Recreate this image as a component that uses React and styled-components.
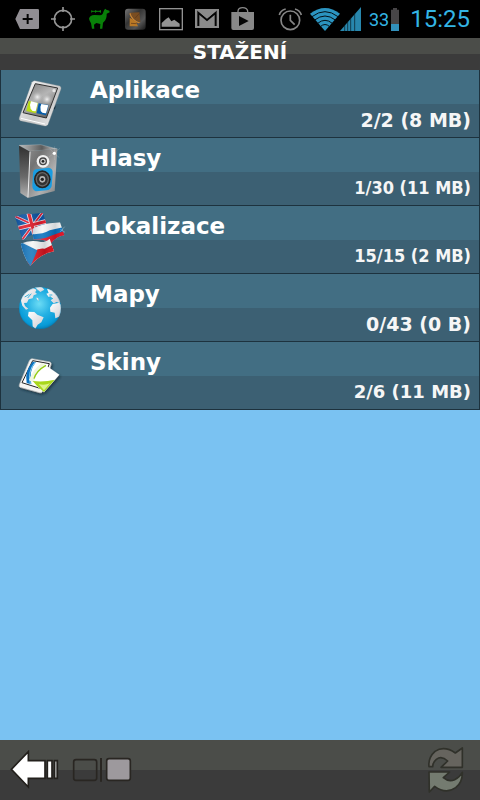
import React, { useState } from "react";
import styled, { createGlobalStyle } from "styled-components";

const GlobalStyle = createGlobalStyle`
  * {
    box-sizing: border-box;
  }

  body {
    margin: 0;
    background: #7ac2f2;
    font-family: "DejaVu Sans", Verdana, sans-serif;
  }
`;

const TagIcon = () => (
  <svg width="24" height="24" viewBox="45 21 72 72">
    <path d="M60 27H113Q117 27 117 31V83Q117 87 113 87H60L46 57Z" fill="#918e93" />
    <path d="M83 42V72M68 57H98" stroke="#050505" strokeWidth="6" />
  </svg>
);

const TargetIcon = () => (
  <svg width="24" height="24" viewBox="153 21 72 72">
    <circle cx="189" cy="57" r="26" fill="none" stroke="#969696" strokeWidth="5" />
    <path
      d="M189 21V36M189 78V93M153 57H168M210 57H225"
      stroke="#969696"
      strokeWidth="5"
    />
  </svg>
);

const LlamaIcon = () => (
  <svg width="24" height="24" viewBox="261 21 72 72">
    <path
      d="M267 56Q270 45 283 45L300 46Q309 45 310 36L313 29L316 26L319 29L328 32L329 37L320 41Q321 57 312 65L309 68L307 86H300L301 72L289 69L282 74L283 86H276L273 70L269 62Z"
      fill="#088008"
    />
    <path
      d="M274 30L279 34L274 39ZM285 30L292 34L285 39ZM303 30L296 34L303 39Z"
      fill="#078007"
    />
    <path d="M274 34H303" stroke="#078007" strokeWidth="3" />
  </svg>
);

const DishIcon = () => (
  <svg width="24" height="24" viewBox="369 21 72 72">
    <defs>
      <linearGradient id="dishBack" x2="1" y2="1">
        <stop offset="0" stopColor="#777" />
        <stop offset="0.4" stopColor="#343434" />
        <stop offset="0.7" stopColor="#555" />
        <stop offset="1" stopColor="#171717" />
      </linearGradient>
    </defs>
    <rect x="375" y="26" width="62" height="63" rx="9" fill="url(#dishBack)" />
    <path d="M391 38L418 37L421 66Q400 62 391 38Z" fill="#7a4d20" />
    <path d="M391 38Q398 61 421 68L416 70Q394 63 388 41Z" fill="#c98331" />
    <path d="M389 53L396 57L408 65L414 79H389Z" fill="#b97825" />
    <path
      d="M405 55L418 40M393 70L410 71"
      fill="none"
      stroke="#5a3719"
      strokeWidth="2"
    />
  </svg>
);

const PictureIcon = () => (
  <svg width="24" height="24" viewBox="57 21 72 72">
    <rect x="59" y="26" width="68" height="63" fill="none" stroke="#929292" strokeWidth="4" />
    <path
      d="M65 80V69L78 57L86 52L94 64L103 59L119 71V80Z"
      fill="#949494"
    />
  </svg>
);

const MailIcon = () => (
  <svg width="24" height="24" viewBox="165 21 72 72">
    <rect x="165" y="27" width="72" height="57" fill="#8b8b8b" />
    <path
      d="M175 78V38L201 60L227 38V78"
      fill="none"
      stroke="#050505"
      strokeWidth="6"
    />
    <path d="M174 31L201 53L228 31" fill="none" stroke="#8b8b8b" strokeWidth="4" />
  </svg>
);

const ShopIcon = () => (
  <svg width="24" height="24" viewBox="273 18 72 72">
    <path
      d="M294 36V30Q295 20 308 20Q321 20 323 30V36"
      fill="none"
      stroke="#8a8a8a"
      strokeWidth="4"
    />
    <path d="M274 33H342V81Q342 87 336 87H280Q274 87 274 81Z" fill="#888" />
    <path d="M297 45L326 60L297 75Z" fill="#050505" />
  </svg>
);

const AlarmIcon = () => (
  <svg width="24" height="24" viewBox="414 21 72 72">
    <g fill="none" stroke="#868686" strokeWidth="5">
      <circle cx="451" cy="61" r="28" />
      <path d="M418 45Q421 31 437 27M465 27Q480 31 484 45" />
      <path d="M451 44V61L464 74" />
    </g>
  </svg>
);

const WifiIcon = () => (
  <svg width="30" height="24" viewBox="33 18 90 72">
    <path d="M33 38Q78 4 123 38L78 90Z" fill="#2b94c0" />
    <g fill="none" stroke="#031017" strokeWidth="3">
      <path d="M39 47Q78 17 117 47" />
      <path d="M47 57Q78 33 109 57" />
      <path d="M56 67Q78 49 100 67" />
      <path d="M64 77Q78 64 92 77" />
    </g>
  </svg>
);

const SignalIcon = () => (
  <svg width="21" height="24" viewBox="120 18 63 72">
    <path d="M120 90L183 18V90Z" fill="#2887ad" />
    <path
      d="M134 72V90M143 61V90M152 50V90M164 36V90"
      stroke="#061820"
      strokeWidth="2"
    />
  </svg>
);

const BatteryIcon = () => (
  <svg width="8" height="24" viewBox="273 18 24 72">
    <path d="M279 21H291V26H297V70H273V26H279Z" fill="#474547" />
    <path d="M273 69H297V90H273Z" fill="#3290bb" />
  </svg>
);

const TabletArt = () => (
  <svg width="60" height="60" viewBox="30 18 180 180">
    <defs>
      <linearGradient id="tabletBody" x2="1" y2="1">
        <stop offset="0" stopColor="#fff" />
        <stop offset="0.6" stopColor="#c8c8c8" />
        <stop offset="1" stopColor="#f5f5f5" />
      </linearGradient>
      <linearGradient id="tabletGlass" x1="0" y1="0" x2="0.6" y2="1">
        <stop offset="0" stopColor="#777" />
        <stop offset="0.5" stopColor="#b5b5b5" />
        <stop offset="1" stopColor="#686868" />
      </linearGradient>
      <radialGradient id="tabletGlow">
        <stop offset="0" stopColor="#f2f2f2" />
        <stop offset="1" stopColor="#aaa" stopOpacity="0" />
      </radialGradient>
    </defs>
    <path
      d="M104 38L179 54Q184 56 183 62L144 169Q141 175 135 174L61 158Q56 155 58 149L96 43Q99 38 104 38Z"
      fill="url(#tabletBody)"
      stroke="#9a9d9e"
      strokeWidth="1"
    />
    <path
      d="M106 47L173 60L139 150L69 134Z"
      fill="url(#tabletGlass)"
      stroke="#303030"
      strokeWidth="3"
    />
    <circle cx="112" cy="87" r="18" fill="url(#tabletGlow)" />
    <circle cx="141" cy="94" r="19" fill="url(#tabletGlow)" />
    <circle cx="162" cy="68" r="5" fill="#e5e5e5" />
    <path d="M86 99L114 105L107 136L79 129Z" fill="#b8dc16" />
    <path d="M93 100L113 105L107 130Q96 131 92 122Q88 110 93 100Z" fill="#fff" />
    <path d="M116 106L146 111L138 142L110 136Z" fill="#075da9" />
    <path d="M124 108L145 112L138 136Q126 137 122 129Q119 117 124 108Z" fill="#fff" />
    <path d="M168 112L162 121L164 125Z" fill="#152532" />
    <path d="M63 151L135 168" stroke="#fff" strokeWidth="3" />
  </svg>
);

const SpeakerArt = () => (
  <svg width="60" height="60" viewBox="30 18 180 180">
    <defs>
      <linearGradient id="speakerFront" x2="1" y2="1">
        <stop offset="0" stopColor="#8a8a8a" />
        <stop offset="0.25" stopColor="#737373" />
        <stop offset="0.65" stopColor="#b0b0b0" />
        <stop offset="1" stopColor="#7c7c7c" />
      </linearGradient>
      <linearGradient id="speakerSide" x2="0" y2="1">
        <stop offset="0" stopColor="#303030" />
        <stop offset="0.6" stopColor="#6a6a6a" />
        <stop offset="1" stopColor="#b5b5b5" />
      </linearGradient>
      <linearGradient id="speakerTop">
        <stop offset="0" stopColor="#c0c0c0" />
        <stop offset="0.6" stopColor="#5c5c5c" />
        <stop offset="1" stopColor="#ccc" />
      </linearGradient>
    </defs>
    <path d="M57 28L90 46L84 186L61 171Z" fill="url(#speakerSide)" />
    <path d="M57 28L122 26L172 39L90 46Z" fill="url(#speakerTop)" stroke="#ccc" />
    <path d="M90 46L172 39L164 165L84 186Z" fill="url(#speakerFront)" />
    <path d="M90 47L84 184" stroke="#eee" strokeWidth="3" />
    <circle cx="129" cy="76" r="19" fill="#f1f1f1" />
    <circle cx="129" cy="76" r="12" fill="#454545" />
    <circle cx="129" cy="76" r="8" fill="#d0d0d0" />
    <circle cx="129" cy="76" r="4" fill="#222" />
    <path
      d="M108 100L147 95Q159 98 158 110L155 151Q150 163 140 163L108 166Q97 162 97 150L99 111Q101 101 108 100Z"
      fill="#199ce1"
    />
    <ellipse cx="127" cy="130" rx="25" ry="27" fill="#242424" />
    <ellipse cx="127" cy="130" rx="20" ry="22" fill="#676767" />
    <ellipse cx="127" cy="130" rx="16" ry="18" fill="#333" />
    <ellipse cx="127" cy="130" rx="9" ry="10" fill="#b5b5b5" />
    <circle cx="127" cy="130" r="5" fill="#222" />
    <path
      d="M149 39L178 65M180 37L146 64M164 31V72"
      stroke="#ddd"
      strokeOpacity="0.6"
      strokeWidth="1"
    />
    <circle cx="163" cy="52" r="5" fill="#fff" />
  </svg>
);

const FlagsArt = () => (
  <svg width="60" height="60" viewBox="30 18 180 180">
    <defs>
      <clipPath id="britishFlag">
        <path d="M45 38Q72 27 93 30L129 27L145 78Q119 76 99 91Q83 98 68 108Z" />
      </clipPath>
      <clipPath id="russianFlag">
        <path d="M97 75Q121 61 151 58L180 55L193 94Q171 96 154 117Q132 104 100 106Z" />
      </clipPath>
      <clipPath id="czechFlag">
        <path d="M62 119Q91 106 123 114Q139 114 149 104L162 142Q119 150 91 186Q73 165 62 119Z" />
      </clipPath>
      <linearGradient id="flagShade">
        <stop offset="0" stopColor="#002e70" stopOpacity="0.25" />
        <stop offset="0.35" stopColor="#fff" stopOpacity="0.12" />
        <stop offset="0.7" stopColor="#123" stopOpacity="0.15" />
        <stop offset="1" stopColor="#fff" stopOpacity="0" />
      </linearGradient>
    </defs>
    <g clipPath="url(#britishFlag)">
      <path d="M42 22H150V112H42Z" fill="#0750a0" />
      <path d="M45 37L144 83M128 25L65 109" stroke="#dfe6f4" strokeWidth="9" />
      <path d="M45 37L144 83M128 25L65 109" stroke="#df1429" strokeWidth="5" />
      <path d="M85 23L108 108M44 75L143 51" stroke="#f2dfe4" strokeWidth="14" />
      <path d="M85 23L108 108M44 75L143 51" stroke="#e31825" strokeWidth="9" />
      <path d="M42 22H150V112H42Z" fill="url(#flagShade)" />
    </g>
    <g clipPath="url(#russianFlag)">
      <path d="M90 50H198V120H90Z" fill="#f5f5f4" />
      <path d="M91 90Q124 93 149 79L192 69V125H91Z" fill="#0870bd" />
      <path d="M91 104Q130 108 151 96L196 80V125H91Z" fill="#e41020" />
      <path d="M90 50H198V120H90Z" fill="url(#flagShade)" />
    </g>
    <g clipPath="url(#czechFlag)">
      <path d="M58 101H167V190H58Z" fill="#f6f6f4" />
      <path d="M100 143Q117 131 134 134L158 122L170 150V190H70Z" fill="#d90e18" />
      <path d="M57 112L112 139L90 191H57Z" fill="#1678bd" />
      <path d="M58 101H167V190H58Z" fill="url(#flagShade)" />
    </g>
    <path d="M180 84L194 68M181 76L195 85" stroke="#d6edf5" strokeWidth="1" />
  </svg>
);

const GlobeArt = () => (
  <svg width="60" height="60" viewBox="30 18 180 180">
    <defs>
      <radialGradient id="ocean" cx="0.48" cy="0.4" r="0.65">
        <stop offset="0" stopColor="#6cdcf5" />
        <stop offset="0.45" stopColor="#25b0e3" />
        <stop offset="0.8" stopColor="#079bd8" />
        <stop offset="1" stopColor="#0871a5" />
      </radialGradient>
      <linearGradient id="land" x2="1" y2="1">
        <stop offset="0" stopColor="#fff" />
        <stop offset="1" stopColor="#cbcbd1" />
      </linearGradient>
      <clipPath id="globeEdge">
        <circle cx="120" cy="108" r="63" />
      </clipPath>
    </defs>
    <circle cx="120" cy="108" r="63" fill="url(#ocean)" />
    <g clipPath="url(#globeEdge)" fill="url(#land)">
      <path d="M65 75Q74 52 99 48L113 54L105 60L111 66L101 70L98 79L86 82L81 92L72 93L75 102L85 110L78 113L67 101L63 86Z" />
      <path d="M102 44L126 45L133 53L121 60L113 53Z" />
      <path d="M141 50L158 54L172 65L184 88L179 94L170 90L161 94L152 85L158 80L151 73L146 75L139 65L146 63Z" />
      <path d="M158 96L178 92L189 106L181 133L166 139L164 122L151 119L150 107Z" />
      <path d="M86 119L103 120L112 128L131 136L124 151L113 158L106 170L98 163L97 145L84 132Z" />
      <path d="M109 77L114 78L117 86L112 84Z" />
    </g>
    <circle cx="120" cy="108" r="62" fill="none" stroke="#065a84" strokeOpacity="0.25" strokeWidth="2" />
    <path
      d="M74 75L88 67M83 78L94 65M108 50L111 59M148 69L157 69M149 77L159 80"
      stroke="#3ab3dc"
      strokeWidth="3"
    />
  </svg>
);

const SkinsArt = () => (
  <svg width="60" height="60" viewBox="30 18 180 180">
    <defs>
      <filter id="cardShadow">
        <feDropShadow dx="4" dy="5" stdDeviation="3" floodColor="#10232d" floodOpacity="0.7" />
      </filter>
    </defs>
    <g filter="url(#cardShadow)">
      <path
        d="M96 56L150 66Q155 68 153 74L127 155Q125 160 119 158L60 142Q56 139 58 134L88 62Q91 56 96 56Z"
        fill="#f5f5f3"
        stroke="#b8b9b9"
        strokeWidth="2"
      />
      <path d="M98 62L148 71L120 145L66 128Z" fill="#fff" stroke="#222" strokeWidth="3" />
      <path d="M98 65L108 66Q86 91 94 133L80 129Q73 94 98 65Z" fill="#0873c1" />
      <path d="M106 66Q82 94 91 132" fill="none" stroke="#91d4ef" strokeWidth="3" />
      <path d="M126 68L178 104L132 157L88 120Q98 88 126 68Z" fill="#fff" />
      <path d="M126 68L138 76Q109 92 103 122L96 126L88 120Q98 88 126 68Z" fill="#f0f6de" />
      <path
        d="M138 76Q109 92 102 116"
        fill="none"
        stroke="#94cc17"
        strokeWidth="4"
      />
      <path
        d="M98 123Q134 127 164 119L132 156L112 139Z"
        fill="#a9d71c"
      />
      <path d="M116 132Q133 137 150 130L132 151Z" fill="#dcf28a" />
    </g>
  </svg>
);

const BackIcon = () => (
  <svg width="50" height="40" viewBox="30 45 150 120">
    <g fill="#fff" stroke="#23201c" strokeWidth="5">
      <path d="M34 103L85 50V77H135V130H85V156Z" />
      <path d="M142 77H156V130H142Z" />
      <path d="M163 77H172V130H163Z" fill="#aaa" />
    </g>
  </svg>
);

const PagesIcon = () => (
  <svg width="60" height="40" viewBox="216 45 180 120">
    <g stroke="#292622" strokeWidth="5">
      <rect x="221" y="74" width="69" height="62" rx="7" fill="none" />
      <path d="M303 69V140" strokeWidth="6" />
      <rect x="320" y="71" width="71" height="65" rx="7" fill="#9d999d" />
    </g>
  </svg>
);

const RefreshIcon = () => (
  <svg width="42" height="50" viewBox="75 30 126 150">
    <g stroke="#30312a" strokeWidth="5" strokeLinejoin="round">
      <path
        d="M87 95Q84 68 105 49Q133 31 166 54L187 39V97H123L143 78Q125 61 109 73Q98 82 98 95Z"
        fill="#66645e"
      />
      <path
        d="M87 111H149L130 128Q146 142 164 134Q179 127 187 112Q188 142 167 158Q138 179 104 154L88 171Z"
        fill="#747b70"
      />
    </g>
  </svg>
);

const categories = [
  { name: "Aplikace", detail: "2/2 (8 MB)", art: <TabletArt /> },
  { name: "Hlasy", detail: "1/30 (11 MB)", art: <SpeakerArt />, condensed: true },
  { name: "Lokalizace", detail: "15/15 (2 MB)", art: <FlagsArt />, condensed: true },
  { name: "Mapy", detail: "0/43 (0 B)", art: <GlobeArt /> },
  { name: "Skiny", detail: "2/6 (11 MB)", art: <SkinsArt />, small: true },
];

const App = () => {
  const [selected, setSelected] = useState(null);

  return (
    <Screen>
      <GlobalStyle />
      <StatusBar>
        <Notifications>
          <TagIcon />
          <TargetIcon />
          <LlamaIcon />
          <DishIcon />
          <PictureIcon />
          <MailIcon />
          <ShopIcon />
        </Notifications>
        <SystemStatus>
          <AlarmIcon />
          <Reception>
            <WifiIcon />
            <SignalIcon />
          </Reception>
          <Charge>
            <span>33</span>
            <BatteryIcon />
          </Charge>
          <Clock>15:25</Clock>
        </SystemStatus>
      </StatusBar>
      <Title>STAŽENÍ</Title>
      <CategoryList>
        {categories.map((category) => (
          <li key={category.name}>
            <CategoryButton
              type="button"
              aria-pressed={selected === category.name}
              onClick={() => setSelected(category.name)}
            >
              <Artwork>{category.art}</Artwork>
              <CategoryText>
                <CategoryName>{category.name}</CategoryName>
                <CategoryDetail
                  $condensed={category.condensed}
                  $small={category.small}
                >
                  {category.detail}
                </CategoryDetail>
              </CategoryText>
            </CategoryButton>
          </li>
        ))}
      </CategoryList>
      <Toolbar>
        <ToolGroup>
          <ToolButton type="button" aria-label="Zpět">
            <BackIcon />
          </ToolButton>
          <ToolButton type="button" aria-label="Stránky">
            <PagesIcon />
          </ToolButton>
        </ToolGroup>
        <ToolButton type="button" aria-label="Obnovit">
          <RefreshIcon />
        </ToolButton>
      </Toolbar>
    </Screen>
  );
};

const Screen = styled.div`
  min-height: 100vh;
  display: flex;
  flex-direction: column;
  background: #7ac2f2;

  svg {
    display: block;
    flex-shrink: 0;
  }
`;

const StatusBar = styled.header`
  display: flex;
  align-items: center;
  justify-content: space-between;
  height: 38px;
  padding: 0 10px 0 15px;
  background: #000;
  color: #33b5e5;
  font-family: Roboto, sans-serif;
`;

const Notifications = styled.div`
  display: flex;
  gap: 12px;
`;

const SystemStatus = styled.div`
  display: flex;
  align-items: center;
  gap: 8px;
`;

const Reception = styled.div`
  display: flex;
`;

const Charge = styled.div`
  display: flex;
  align-items: center;
  gap: 2px;
  font-size: 18px;
`;

const Clock = styled.time`
  padding-left: 3px;
  font-size: 24px;
`;

const Title = styled.h1`
  margin: 0;
  padding-bottom: 4px;
  background: linear-gradient(#4b4d49 50%, #3b3b3b 50%);
  color: #fff;
  font-size: 20px;
  line-height: 28px;
  text-align: center;
`;

const CategoryList = styled.ul`
  margin: 0;
  padding: 0;
  list-style: none;
`;

const CategoryButton = styled.button`
  display: flex;
  align-items: center;
  gap: 10px;
  width: 100%;
  padding: 0 8px;
  border: 1px solid #1d323e;
  border-top: 0;
  background: linear-gradient(#426e83 34px, #3c6073 34px);
  color: #fff;
  font-family: inherit;
  font-weight: bold;
  text-align: left;
  cursor: pointer;
`;

const Artwork = styled.span`
  display: flex;
  justify-content: center;
  width: 62px;
`;

const CategoryText = styled.span`
  display: flex;
  flex: 1;
  flex-direction: column;
  gap: 5px;
  padding: 7px 0 6px 9px;
`;

const CategoryName = styled.span`
  font-size: 23px;
  line-height: 27px;
`;

const CategoryDetail = styled.span`
  align-self: flex-end;
  color: #f6f6f6;
  font-family: ${(props) =>
    props.$condensed ? '"DejaVu Sans Condensed", "DejaVu Sans", sans-serif' : "inherit"};
  font-size: ${(props) => (props.$condensed || props.$small ? "18px" : "19px")};
  line-height: 22px;
`;

const Toolbar = styled.footer`
  display: flex;
  align-items: center;
  justify-content: space-between;
  height: 60px;
  margin-top: auto;
  padding: 0 13px 0 10px;
  background: linear-gradient(#4b4d49 50%, #3b3b3b 50%);
`;

const ToolGroup = styled.div`
  display: flex;
  gap: 12px;
`;

const ToolButton = styled.button`
  padding: 0;
  border: 0;
  background: none;
  cursor: pointer;
`;

export default App;
